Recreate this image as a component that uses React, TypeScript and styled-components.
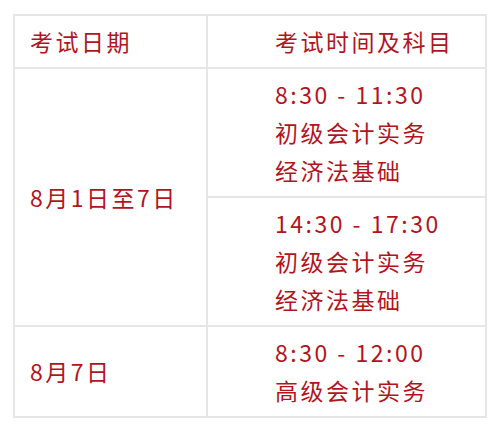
import styled, {createGlobalStyle} from 'styled-components';

const GlobalStyle = createGlobalStyle`
  html, body {
    margin: 0;
    padding: 0;
    background: #fff;
  }
  body {
    font-family: "Noto Sans CJK SC", "Noto Sans", sans-serif;
  }
`;

const Page = styled.div`
  padding: 14px 13px;
`;

const Table = styled.table`
  width: 474px;
  table-layout: fixed;
  border-collapse: collapse;
  border: 2px solid #e6e6e6;
  color: #b2141e;
  font-size: 23px;
  letter-spacing: 2.5px;
  line-height: 38px;
`;

const Cell = styled.td<{$wide?: boolean}>`
  border: 2px solid #e6e6e6;
  padding: ${(p) => (p.$wide ? '6px 0 7px 67px' : '6px 0 7px 15px')};
  vertical-align: middle;
  text-align: left;
  font-weight: 400;
`;

const Head = styled(Cell).attrs({as: 'th'})``;

const Line = styled.div`
  white-space: nowrap;
`;

const sessions = [
  {date: '8月1日至7日', slots: [
    ['8:30 - 11:30', '初级会计实务', '经济法基础'],
    ['14:30 - 17:30', '初级会计实务', '经济法基础'],
  ]},
  {date: '8月7日', slots: [['8:30 - 12:00', '高级会计实务']]},
];

export default function App() {
  return (
    <>
      <GlobalStyle />
      <Page>
        <Table>
          <colgroup>
            <col style={{width: 193}} />
            <col />
          </colgroup>
          <thead>
            <tr>
              <Head>考试日期</Head>
              <Head $wide>考试时间及科目</Head>
            </tr>
          </thead>
          <tbody>
            {sessions.map((s) =>
              s.slots.map((slot, i) => (
                <tr key={s.date + i}>
                  {i === 0 && <Cell rowSpan={s.slots.length}>{s.date}</Cell>}
                  <Cell $wide>
                    {slot.map((l) => (
                      <Line key={l}>{l}</Line>
                    ))}
                  </Cell>
                </tr>
              )),
            )}
          </tbody>
        </Table>
      </Page>
    </>
  );
}
